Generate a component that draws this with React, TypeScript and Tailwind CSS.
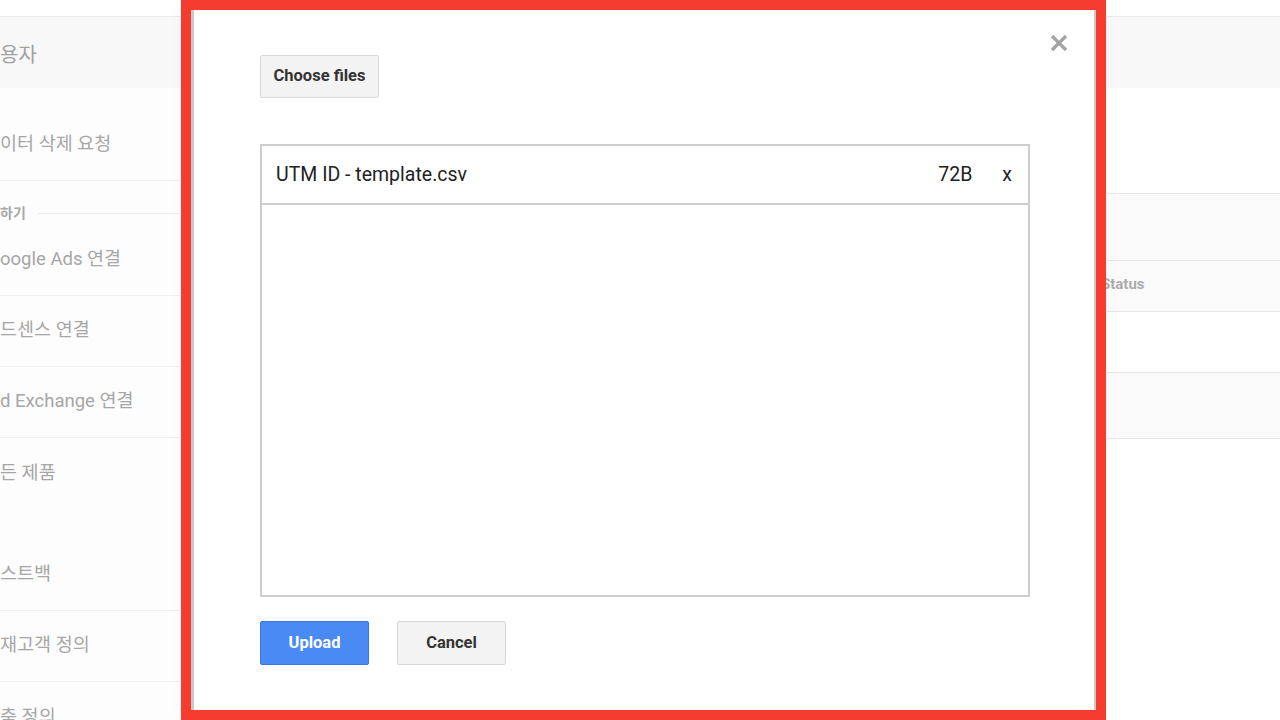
import React from "react";

const font = { fontFamily: 'Roboto, "Noto Sans CJK KR", "Noto Sans", sans-serif' };

function SideItem({ label, line = true }: { label: string; line?: boolean }) {
  return (
    <div className={`h-[71px] shrink-0 flex items-center text-[18.5px] text-[#a6a6a6] whitespace-nowrap ${line ? "border-b border-[#efefef]" : ""}`}>
      {label}
    </div>
  );
}

export default function App() {
  return (
    <div className="relative w-[1280px] h-[720px] overflow-hidden bg-white" style={font}>
      {/* background page */}
      <div className="flex flex-col">
        <div className="h-[17px] shrink-0 border-b border-[#e8e8e8] bg-white" />
        <div className="h-[71px] shrink-0 bg-[#f8f8f8] flex items-center text-[20px] text-[#a0a0a0] pt-[4px]">
          <span>용자</span>
        </div>
        <div className="flex shrink-0">
          <div className="w-[181px] shrink-0 flex flex-col bg-[#fdfdfd]">
            <div className="h-[93px] shrink-0 pt-[22px] flex items-center text-[18.5px] text-[#a6a6a6] border-b border-[#efefef]">이터 삭제 요청</div>
            <div className="h-[44px] shrink-0 flex items-start gap-3 pt-[24px]">
              <span className="text-[14px] leading-[16px] font-bold text-[#a8a8a8]">하기</span>
              <div className="flex-1 h-px mt-[8px] bg-[#ededed]" />
            </div>
            <SideItem label="oogle Ads 연결" />
            <SideItem label="드센스 연결" />
            <SideItem label="d Exchange 연결" />
            <SideItem label="든 제품" line={false} />
            <div className="h-[31px] shrink-0" />
            <SideItem label="스트백" />
            <SideItem label="재고객 정의" />
            <SideItem label="춤 정의" line={false} />
          </div>
          <div className="flex-1 flex flex-col">
            <div className="h-[105px] shrink-0 bg-white" />
            <div className="h-[68px] shrink-0 bg-[#fafafa] border-y border-[#e6e6e6]" />
            <div className="h-[51px] shrink-0 bg-[#fafafa] border-b border-[#e6e6e6] flex items-center pl-[920px] pb-[3px] text-[15px] font-bold text-[#ababab]">
              Status
            </div>
            <div className="h-[61px] shrink-0 bg-white border-b border-[#e6e6e6]" />
            <div className="h-[66px] shrink-0 bg-[#fafafa] border-b border-[#e6e6e6]" />
            <div className="flex-1 bg-white" />
          </div>
        </div>
      </div>

      {/* modal */}
      <div className="absolute left-[191px] top-[-10px] w-[905px] h-[740px] bg-white border-l-[3px] border-r-[2px] border-[#c9c9c9] shadow-[0_0_18px_rgba(0,0,0,0.10)]">
        <div className="flex flex-col pl-[66px] pt-[65px]">
          <button className="w-[119px] h-[43px] rounded-[2px] bg-[#f3f3f3] border border-[#d9d9d9] text-[16.5px] font-bold text-[#333]">
            Choose files
          </button>
          <div className="mt-[46px] w-[770px] h-[453px] border-2 border-[#cdcdcd] flex flex-col">
            <div className="h-[59px] border-b-2 border-[#cdcdcd] flex items-center pl-[14px] pr-[16px] text-[19.5px] text-[#222]">
              <span className="flex-1">UTM ID - template.csv</span>
              <span className="mr-[30px]">72B</span>
              <span>x</span>
            </div>
          </div>
          <div className="mt-[24px] flex gap-[28px]">
            <button className="w-[109px] h-[44px] rounded-[2px] bg-[#4a8af4] border border-[#3a76dd] text-[16.5px] font-bold text-white">
              Upload
            </button>
            <button className="w-[109px] h-[44px] rounded-[2px] bg-[#f3f3f3] border border-[#d6d6d6] text-[16.5px] font-bold text-[#333]">
              Cancel
            </button>
          </div>
        </div>
        <svg className="absolute left-[856px] top-[44px]" width="18" height="18" viewBox="0 0 18 18">
          <path d="M2 2 L16 16 M16 2 L2 16" stroke="#a3a3a3" strokeWidth="3.2" strokeLinecap="butt" />
        </svg>
      </div>

      {/* red annotation frame */}
      <div className="absolute left-[181px] top-0 w-[925px] h-[720px] border-[10px] border-[#f53c2e] pointer-events-none" />
    </div>
  );
}
